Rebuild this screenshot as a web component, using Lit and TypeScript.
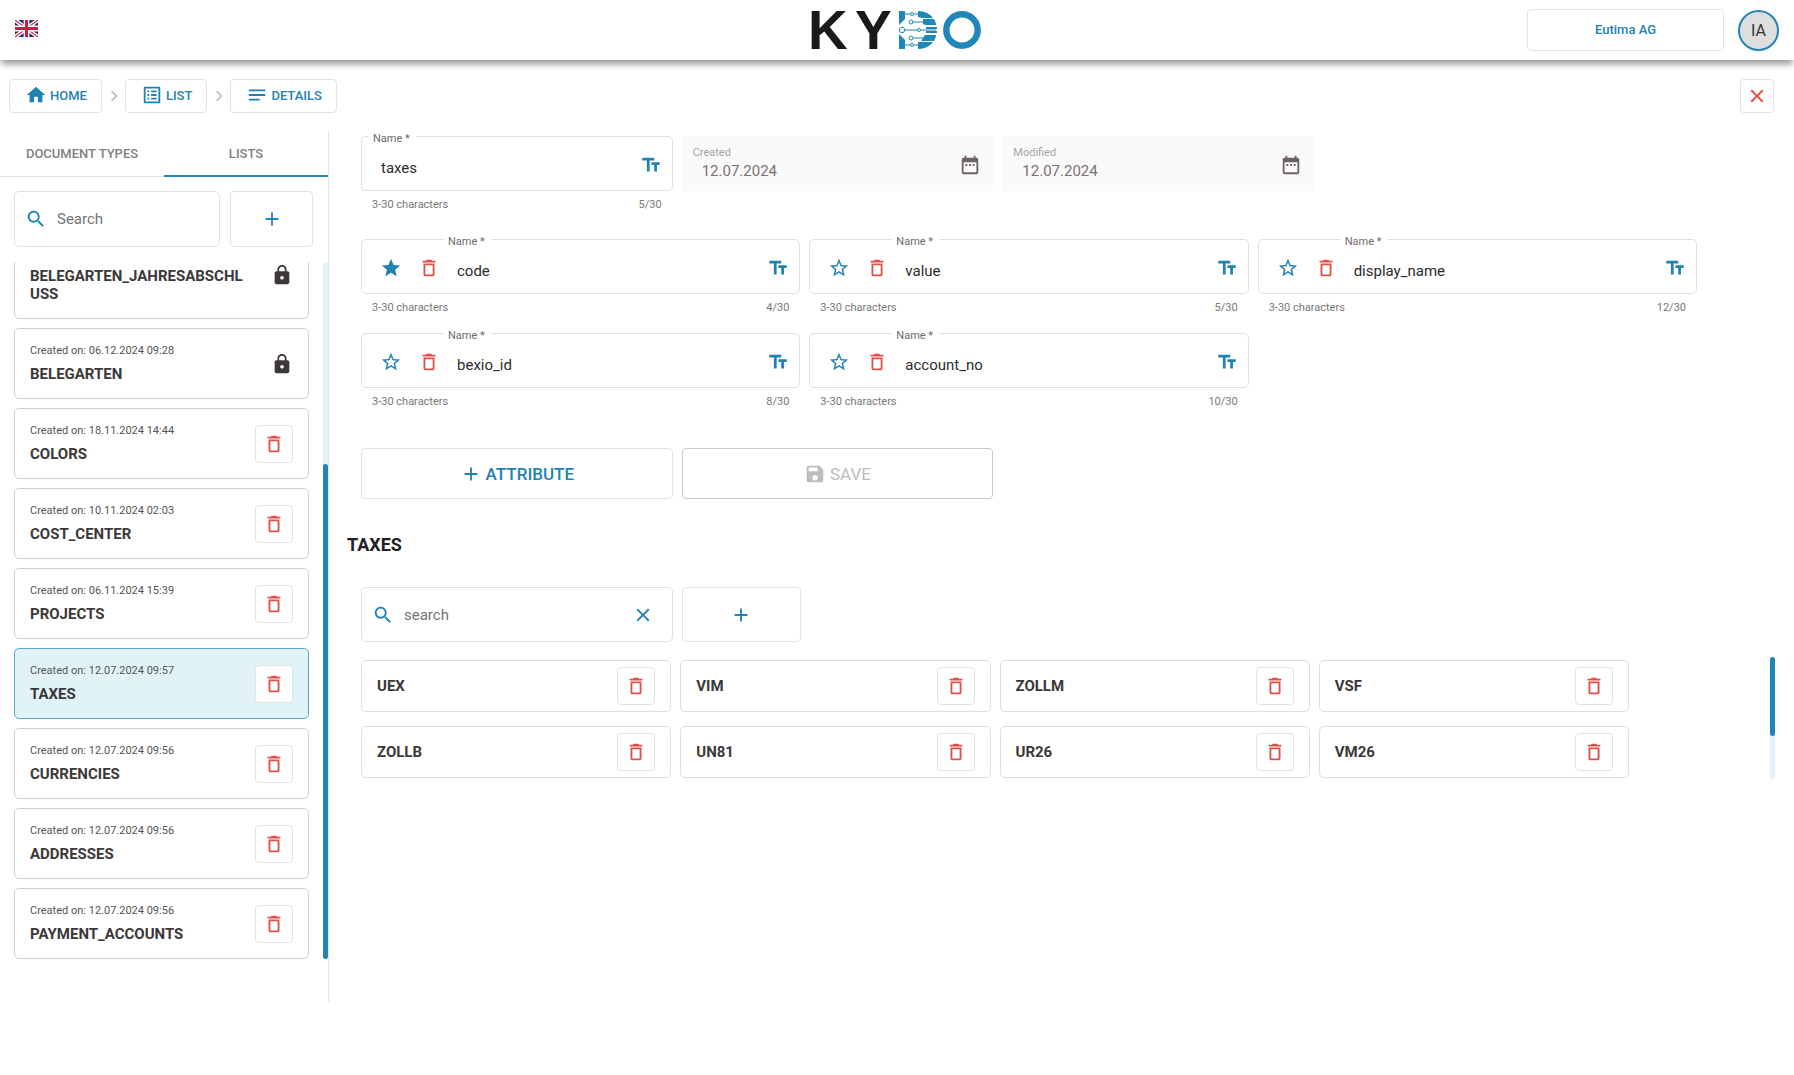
import { LitElement, html, css, svg, nothing } from "lit";
import { customElement, property } from "lit/decorators.js";
import { classMap } from "lit/directives/class-map.js";

const ICONS: Record<string, string> = {
  home: "M10 20v-6h4v6h5v-8h3L12 3 2 12h3v8z",
  list: "M19 5v14H5V5h14m1.1-2H3.9c-.5 0-.9.4-.9.9v16.2c0 .4.4.9.9.9h16.2c.4 0 .9-.5.9-.9V3.9c0-.5-.5-.9-.9-.9zM11 7h6v2h-6V7zm0 4h6v2h-6v-2zm0 4h6v2h-6zM7 7h2v2H7zm0 4h2v2H7zm0 4h2v2H7z",
  notes: "M21 11.01L3 11v2h18zM3 16h12v2H3zM21 6H3v2.01L21 8z",
  chevron: "M10 6L8.59 7.41 13.17 12l-4.58 4.59L10 18l6-6z",
  close: "M19 6.41L17.59 5 12 10.59 6.41 5 5 6.41 10.59 12 5 17.59 6.41 19 12 13.41 17.59 19 19 17.59 13.41 12z",
  search: "M15.5 14h-.79l-.28-.27C15.41 12.59 16 11.11 16 9.5 16 5.91 13.09 3 9.5 3S3 5.91 3 9.5 5.91 16 9.5 16c1.61 0 3.09-.59 4.23-1.57l.27.28v.79l5 4.99L20.49 19l-4.99-5zm-6 0C7.01 14 5 11.99 5 9.5S7.01 5 9.5 5 14 7.01 14 9.5 11.99 14 9.5 14z",
  add: "M19 13h-6v6h-2v-6H5v-2h6V5h2v6h6v2z",
  lock: "M18 8h-1V6c0-2.76-2.24-5-5-5S7 3.24 7 6v2H6c-1.1 0-2 .9-2 2v10c0 1.1.9 2 2 2h12c1.1 0 2-.9 2-2V10c0-1.1-.9-2-2-2zm-6 9c-1.1 0-2-.9-2-2s.9-2 2-2 2 .9 2 2-.9 2-2 2zm3.1-9H8.9V6c0-1.71 1.39-3.1 3.1-3.1 1.71 0 3.1 1.39 3.1 3.1v2z",
  trash: "M6 19c0 1.1.9 2 2 2h8c1.1 0 2-.9 2-2V7H6v12zM8 9h8v10H8V9zm7.5-5l-1-1h-5l-1 1H5v2h14V4h-3.5z",
  star: "M12 17.27L18.18 21l-1.64-7.03L22 9.24l-7.19-.61L12 2 9.19 8.63 2 9.24l5.46 4.73L5.82 21z",
  starOutline: "M22 9.24l-7.19-.62L12 2 9.19 8.63 2 9.24l5.46 4.73L5.82 21 12 17.27 18.18 21l-1.63-7.03L22 9.24zM12 15.4l-3.76 2.27 1-4.28-3.32-2.88 4.38-.38L12 6.1l1.71 4.04 4.38.38-3.32 2.88 1 4.28L12 15.4z",
  text: "M2.5 4v3h5v12h3V7h5V4h-13zm19 5h-9v3h3v7h3v-7h3V9z",
  calendar: "M9 11H7v2h2v-2zm4 0h-2v2h2v-2zm4 0h-2v2h2v-2zm2-7h-1V2h-2v2H8V2H6v2H5c-1.11 0-1.99.9-1.99 2L3 20c0 1.1.89 2 2 2h14c1.1 0 2-.9 2-2V6c0-1.1-.9-2-2-2zm0 16H5V9h14v11z",
  save: "M17 3H5c-1.11 0-2 .9-2 2v14c0 1.1.89 2 2 2h14c1.1 0 2-.9 2-2V7l-4-4zm-5 16c-1.66 0-3-1.34-3-3s1.34-3 3-3 3 1.34 3 3-1.34 3-3 3zm3-10H5V5h10v4z",
};

const icon = (name: string) => html`
  <svg class="icon" viewBox="0 0 24 24" aria-hidden="true">${svg`<path d=${ICONS[name]} />`}</svg>
`;

const shared = css`
  * {
    box-sizing: border-box;
  }
  .icon {
    display: block;
    flex: none;
    width: 22px;
    height: 22px;
    fill: currentColor;
  }
  button,
  input {
    font: inherit;
    color: inherit;
    margin: 0;
  }
  button {
    display: flex;
    align-items: center;
    justify-content: center;
    padding: 0;
    border: 1px solid #e3e3e3;
    border-radius: 4px;
    background: #fff;
    cursor: pointer;
  }
  input {
    flex: 1;
    min-width: 0;
    padding: 0;
    border: 0;
    outline: 0;
    background: none;
  }
  .delete {
    flex: none;
    width: 38px;
    height: 38px;
    color: #dd5047;
  }
`;

@customElement("name-field")
class NameField extends LitElement {
  @property() value = "";
  @property({ type: Boolean }) attribute_ = false;
  @property({ type: Boolean }) primary = false;

  static styles = [
    shared,
    css`
      :host {
        display: block;
      }
      .box {
        position: relative;
        display: flex;
        align-items: center;
        gap: 16px;
        height: 55px;
        padding: 2px 10px 0 18px;
        border: 1px solid #e0e0e0;
        border-radius: 5px;
        color: #1e82b4;
      }
      label {
        position: absolute;
        top: -5px;
        left: 7px;
        padding: 0 6px 0 4px;
        background: #fff;
        color: #6b6b6b;
        font-size: 11px;
        line-height: 14px;
      }
      .attribute label {
        left: 82px;
      }
      input {
        padding: 7px 0 0 1px;
        color: #2c2c2c;
        font-size: 15px;
        line-height: 20px;
      }
      .bare {
        border: 0;
        background: none;
      }
      .remove {
        color: #dd5047;
      }
      .hint {
        display: flex;
        justify-content: space-between;
        padding: 6px 11px 2px;
        color: #777;
        font-size: 11px;
        line-height: 16px;
      }
    `,
  ];

  render() {
    return html`
      <div class=${classMap({ box: true, attribute: this.attribute_ })}>
        ${this.attribute_
          ? html`
              <button class="bare" aria-label="Primary attribute">
                ${icon(this.primary ? "star" : "starOutline")}
              </button>
              <button class="bare remove" aria-label="Delete attribute">${icon("trash")}</button>
            `
          : nothing}
        <input id="name" .value=${this.value} maxlength="30" />
        <label for="name">Name *</label>
        ${icon("text")}
      </div>
      <div class="hint"><span>3-30 characters</span><span>${this.value.length}/30</span></div>
    `;
  }
}

@customElement("date-field")
class DateField extends LitElement {
  @property() label = "";
  @property() value = "";

  static styles = [
    shared,
    css`
      .box {
        display: flex;
        align-items: center;
        height: 55px;
        padding: 2px 12px 0 11px;
        background: #fafafa;
        color: #6f6262;
      }
      .text {
        flex: 1;
        display: flex;
        flex-direction: column;
        padding-bottom: 3px;
      }
      label {
        color: #a3a3a3;
        font-size: 11px;
        line-height: 16px;
      }
      input {
        width: 100%;
        padding-left: 9px;
        color: #7d7171;
        font-size: 15px;
        line-height: 20px;
      }
    `,
  ];

  render() {
    return html`
      <div class="box">
        <div class="text">
          <label for="date">${this.label}</label>
          <input id="date" .value=${this.value} disabled />
        </div>
        ${icon("calendar")}
      </div>
    `;
  }
}

interface ListEntry {
  title: string;
  created?: string;
  locked?: boolean;
  selected?: boolean;
}

@customElement("list-sidebar")
class ListSidebar extends LitElement {
  private entries: ListEntry[] = [
    { title: "BELEGARTEN_JAHRESABSCHLUSS", locked: true },
    { title: "BELEGARTEN", created: "06.12.2024 09:28", locked: true },
    { title: "COLORS", created: "18.11.2024 14:44" },
    { title: "COST_CENTER", created: "10.11.2024 02:03" },
    { title: "PROJECTS", created: "06.11.2024 15:39" },
    { title: "TAXES", created: "12.07.2024 09:57", selected: true },
    { title: "CURRENCIES", created: "12.07.2024 09:56" },
    { title: "ADDRESSES", created: "12.07.2024 09:56" },
    { title: "PAYMENT_ACCOUNTS", created: "12.07.2024 09:56" },
  ];

  static styles = [
    shared,
    css`
      :host {
        display: flex;
        flex-direction: column;
        flex: none;
        box-sizing: border-box;
        width: 329px;
        min-height: 0;
        padding-bottom: 43px;
        border-right: 1px solid #e6e6e6;
      }
      .tabs {
        display: flex;
        height: 46px;
      }
      .tab {
        flex: 1;
        border: 0;
        border-bottom: 1px solid #e0e0e0;
        border-radius: 0;
        color: #7f7f7f;
        font-size: 13px;
        font-weight: 500;
      }
      .active {
        border-bottom: 2px solid #2484b4;
      }
      .tools {
        display: flex;
        gap: 10px;
        padding: 14px 15px 15px 14px;
      }
      .search {
        display: flex;
        flex: 1;
        min-width: 0;
        align-items: center;
        gap: 10px;
        height: 56px;
        padding: 0 10px;
        border: 1px solid #e0e0e0;
        border-radius: 5px;
        color: #1e82b4;
      }
      .search input {
        color: #757575;
        font-size: 15px;
      }
      .search input::placeholder {
        color: #757575;
      }
      .add {
        flex: none;
        width: 83px;
        color: #1e82b4;
      }
      .scroll {
        display: flex;
        flex: 1;
        min-height: 0;
      }
      .viewport {
        display: flex;
        flex: 1;
        flex-direction: column-reverse;
        overflow-y: auto;
        scrollbar-width: none;
        padding: 0 14px;
      }
      .cards {
        display: flex;
        flex-direction: column;
        gap: 9px;
        margin: 0;
        padding: 0;
        list-style: none;
      }
      .card {
        display: flex;
        align-items: center;
        padding: 13px 15px;
        border: 1px solid #cfcfcf;
        border-radius: 5px;
        color: #3c3838;
      }
      .selected {
        border-color: #5aa9cc;
        background: #e1f3f9;
      }
      .info {
        flex: 1;
        min-width: 0;
        padding: 0 24px 2px 0;
      }
      .created {
        min-height: 18px;
        margin-bottom: 5px;
        color: #555;
        font-size: 11px;
        line-height: 18px;
      }
      .title {
        font-size: 15px;
        font-weight: 700;
        line-height: 18px;
        overflow-wrap: anywhere;
      }
      .track {
        width: 5px;
        border-radius: 3px;
        background: #e1f3f9;
        display: flex;
        flex-direction: column;
        justify-content: flex-end;
      }
      .thumb {
        height: 71%;
        border-radius: 3px;
        background: #2484b4;
      }
    `,
  ];

  render() {
    return html`
      <div class="tabs">
        <button class="tab">DOCUMENT TYPES</button>
        <button class="tab active">LISTS</button>
      </div>
      <div class="tools">
        <div class="search">${icon("search")}<input aria-label="Search" placeholder="Search" /></div>
        <button class="add" aria-label="Add list">${icon("add")}</button>
      </div>
      <div class="scroll">
        <div class="viewport">
          <ul class="cards">
            ${this.entries.map(
              (e) => html`
                <li class=${classMap({ card: true, selected: !!e.selected })}>
                  <div class="info">
                    <div class="created">${e.created ? `Created on: ${e.created}` : nothing}</div>
                    <div class="title">${e.title}</div>
                  </div>
                  ${e.locked
                    ? icon("lock")
                    : html`<button class="delete" aria-label="Delete list">${icon("trash")}</button>`}
                </li>
              `,
            )}
          </ul>
        </div>
        <div class="track"><div class="thumb"></div></div>
      </div>
    `;
  }
}

@customElement("list-details")
class ListDetails extends LitElement {
  private attributes_ = ["code", "value", "display_name", "bexio_id", "account_no"];
  private items = ["UEX", "VIM", "ZOLLM", "VSF", "ZOLLB", "UN81", "UR26", "VM26"];

  static styles = [
    shared,
    css`
      :host {
        display: block;
        flex: 1;
        min-width: 0;
        padding: 5px 19px 0 32px;
      }
      .form {
        margin-right: 78px;
      }
      .row {
        display: grid;
        grid-template-columns: repeat(3, 5fr) 6fr;
        gap: 9px;
      }
      .attributes {
        display: grid;
        grid-template-columns: repeat(3, 1fr);
        gap: 15px 9px;
        margin: 24px 0 36px;
      }
      .action {
        height: 51px;
        gap: 4px;
        color: #1e82b4;
        font-size: 17px;
        font-weight: 500;
      }
      .action:disabled {
        border-color: #c8c8c8;
        color: #bdbdbd;
        font-weight: 400;
      }
      h2 {
        margin: 34px 0 30px -14px;
        color: #222;
        font-size: 18px;
        font-weight: 700;
        line-height: 24px;
      }
      .search {
        display: flex;
        align-items: center;
        gap: 10px;
        height: 55px;
        padding: 0 18px 0 10px;
        border: 1px solid #e0e0e0;
        border-radius: 5px;
        color: #1e82b4;
      }
      .search input {
        font-size: 15px;
      }
      .search input::placeholder {
        color: #757575;
      }
      .bare {
        border: 0;
        background: none;
      }
      .add {
        width: 119px;
        color: #1e82b4;
      }
      .results {
        display: flex;
        gap: 141px;
        margin-top: 15px;
      }
      .items {
        display: grid;
        flex: 1;
        grid-template-columns: repeat(4, 1fr);
        gap: 14px 9px;
        margin: 0;
        padding: 3px 0 1px;
        list-style: none;
      }
      .item {
        display: flex;
        align-items: center;
        justify-content: space-between;
        height: 52px;
        padding: 0 15px;
        border: 1px solid #dedede;
        border-radius: 5px;
        color: #3c3838;
        font-size: 15px;
        font-weight: 700;
      }
      .track {
        width: 5px;
        border-radius: 3px;
        background: #e1f3f9;
      }
      .thumb {
        height: 65%;
        border-radius: 3px;
        background: #2484b4;
      }
    `,
  ];

  render() {
    return html`
      <div class="form">
        <div class="row">
          <name-field value="taxes"></name-field>
          <date-field label="Created" value="12.07.2024"></date-field>
          <date-field label="Modified" value="12.07.2024"></date-field>
        </div>
        <div class="attributes">
          ${this.attributes_.map(
            (a, i) => html`<name-field .value=${a} .attribute_=${true} .primary=${i === 0}></name-field>`,
          )}
        </div>
        <div class="row">
          <button class="action">${icon("add")}ATTRIBUTE</button>
          <button class="action" disabled>${icon("save")}SAVE</button>
        </div>
        <h2>TAXES</h2>
        <div class="row">
          <div class="search">
            ${icon("search")}
            <input aria-label="search" placeholder="search" />
            <button class="bare" aria-label="Clear search">${icon("close")}</button>
          </div>
          <button class="add" aria-label="Add entry">${icon("add")}</button>
        </div>
      </div>
      <div class="results">
        <ul class="items">
          ${this.items.map(
            (t) => html`
              <li class="item">
                <span>${t}</span>
                <button class="delete" aria-label="Delete entry">${icon("trash")}</button>
              </li>
            `,
          )}
        </ul>
        <div class="track"><div class="thumb"></div></div>
      </div>
    `;
  }
}

@customElement("app-root")
class AppRoot extends LitElement {
  static styles = [
    shared,
    css`
      :host {
        display: flex;
        flex-direction: column;
        box-sizing: border-box;
        height: 100vh;
        padding-bottom: 73px;
        background: #fff;
        font-family: Roboto, "Liberation Sans", sans-serif;
        font-size: 14px;
      }
      header {
        display: grid;
        flex: none;
        grid-template-columns: 1fr auto 1fr;
        align-items: center;
        height: 60px;
        padding: 0 15px;
        box-shadow: 0 5px 7px -1px rgba(0, 0, 0, 0.42);
      }
      .language {
        justify-self: start;
        padding-bottom: 3px;
        border: 0;
        border-radius: 0;
      }
      .flag {
        display: block;
        width: 23px;
        height: 17px;
      }
      .logo {
        display: block;
        width: 180px;
        height: 60px;
        overflow: visible;
      }
      .account {
        display: flex;
        align-items: center;
        justify-self: end;
        gap: 14px;
      }
      .tenant {
        width: 197px;
        height: 42px;
        padding-bottom: 2px;
        color: #1e82b4;
        font-size: 13px;
        font-weight: 500;
      }
      .avatar {
        width: 41px;
        height: 41px;
        border: 2px solid #2484b4;
        border-radius: 50%;
        background: #dedede;
        color: #333;
        font-size: 16px;
      }
      nav {
        display: flex;
        flex: none;
        align-items: center;
        padding: 19px 20px 18px 9px;
      }
      .crumb {
        display: flex;
        align-items: center;
        gap: 3px;
        height: 34px;
        padding: 0 14px 2px 15px;
        border: 1px solid #e3e3e3;
        border-radius: 4px;
        color: #1e82b4;
        font-size: 13px;
        font-weight: 500;
        text-decoration: none;
      }
      .separator {
        padding-left: 1px;
        color: #c4c4c4;
      }
      .close {
        width: 34px;
        height: 34px;
        margin-left: auto;
        color: #e5493d;
      }
      main {
        display: flex;
        flex: 1;
        min-height: 0;
      }
    `,
  ];

  private flag() {
    return html`
      <svg class="flag" viewBox="0 0 60 44" preserveAspectRatio="none" aria-hidden="true">
        <rect width="60" height="44" fill="#1f2a6b" />
        <path d="M0 0L60 44M60 0L0 44" stroke="#fff" stroke-width="10" />
        <path d="M0 0L60 44M60 0L0 44" stroke="#d0254a" stroke-width="3" />
        <path d="M30 0V44M0 22H60" stroke="#fff" stroke-width="15" />
        <path d="M30 0V44M0 22H60" stroke="#cf1a3c" stroke-width="8" />
      </svg>
    `;
  }

  private logo() {
    return html`
      <svg class="logo" viewBox="-4 -10 180 60" role="img" aria-label="KYDO">
        <g font-family="Liberation Sans, sans-serif" font-weight="700" font-size="55" fill="#1a1a1a">
          <text x="-3" y="39">K</text>
          <text x="44" y="39">Y</text>
        </g>
        <g fill="#2088b8">
          <path d="M88 1h6v8l-6 6z" />
          <path d="M88 24l6 6v9h-6z" />
          <path d="M107 1c7 0 12 3 15 7h-11l-4-1z" />
          <path d="M112 9h11c1 2 2 4 2 6h-11l-2-1z" />
          <path d="M115 17h11v2h-11zM115 21h11v2h-11z" />
          <path d="M114 25h11c0 2-1 4-2 6h-13z" />
          <path d="M107 32h15c-3 4-8 7-15 7z" />
        </g>
        <g fill="#fff" stroke="#2088b8" stroke-width="1">
          <path d="M94 4h14M102 12h12M93 20h32M102 28h12M94 35h14" />
          <circle cx="101" cy="4" r="1.5" />
          <circle cx="100" cy="12" r="2" />
          <circle cx="91" cy="20" r="2.7" />
          <circle cx="108" cy="20" r="1.5" />
          <circle cx="100" cy="28" r="2" />
          <circle cx="101" cy="35" r="1.5" />
        </g>
        <circle cx="151" cy="20" r="15.7" fill="none" stroke="#2088b8" stroke-width="6.4" />
      </svg>
    `;
  }

  render() {
    return html`
      <header>
        <button class="language" aria-label="Language">${this.flag()}</button>
        ${this.logo()}
        <div class="account">
          <button class="tenant">Eutima AG</button>
          <button class="avatar">IA</button>
        </div>
      </header>
      <nav>
        <a class="crumb" href="#home">${icon("home")}HOME</a>
        <span class="separator">${icon("chevron")}</span>
        <a class="crumb" href="#list">${icon("list")}LIST</a>
        <span class="separator">${icon("chevron")}</span>
        <a class="crumb" href="#details">${icon("notes")}DETAILS</a>
        <button class="close" aria-label="Close">${icon("close")}</button>
      </nav>
      <main>
        <list-sidebar></list-sidebar>
        <list-details></list-details>
      </main>
    `;
  }
}
